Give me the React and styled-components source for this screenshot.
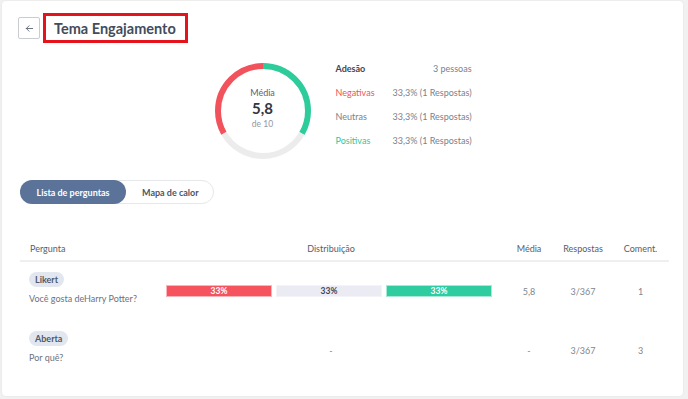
import React from "react";
import styled, { createGlobalStyle } from "styled-components";

const Global = createGlobalStyle`
  html, body { margin: 0; padding: 0; background: #f1f1f2; }
  body { font-family: Lato, "Open Sans", sans-serif; }
  * { box-sizing: border-box; }
`;

const Page = styled.div`
  padding: 1px 5px 3px 2px;
  height: 399px;
`;

const Card = styled.div`
  background: #fff;
  border-radius: 4px;
  box-shadow: 0 0 2px rgba(0,0,0,0.08);
  height: 395px;
  padding: 12px 16px 0 16px;
  display: flex;
  flex-direction: column;
`;

const Header = styled.div`
  display: flex;
  align-items: center;
  gap: 3px;
`;

const BackButton = styled.button`
  width: 22px;
  height: 22px;
  border: 1px solid #c9ccd1;
  border-radius: 2px;
  background: #fff;
  display: flex;
  align-items: center;
  justify-content: center;
  padding: 0;
  color: #5b6577;
`;

const TitleBox = styled.div`
  border: 3px solid #e5131b;
  height: 30px;
  width: 145px;
  padding-left: 8px;
  display: flex;
  align-items: center;
`;

const Title = styled.h1`
  margin: 0;
  font-size: 14.5px;
  font-weight: 700;
  color: #434c5b;
  white-space: nowrap;
`;

const Summary = styled.div`
  display: flex;
  justify-content: center;
  align-items: flex-start;
  gap: 24px;
  margin-top: 14px;
`;

const Donut = styled.div`
  position: relative;
  width: 98px;
  height: 98px;
  margin-top: 5px;
`;

const DonutCenter = styled.div`
  position: absolute;
  inset: 0;
  display: flex;
  flex-direction: column;
  align-items: center;
  justify-content: center;
  padding-bottom: 5px;
`;

const DonutLabel = styled.span`
  font-size: 9px;
  color: #5a6272;
  line-height: 12px;
`;

const DonutValue = styled.span`
  font-size: 15px;
  font-weight: 700;
  color: #2f3644;
  line-height: 19px;
`;

const DonutSub = styled.span`
  font-size: 8.5px;
  color: #9197a3;
  line-height: 13px;
`;

const Stats = styled.div`
  display: grid;
  grid-template-columns: auto auto;
  column-gap: 18px;
  width: 134px;
  margin-right: 2px;
`;

const StatLabel = styled.span`
  font-size: 9px;
  line-height: 24px;
  color: ${(p) => p.$color};
  font-weight: ${(p) => (p.$strong ? 700 : 400)};
`;

const StatValue = styled.span`
  font-size: 9px;
  line-height: 24px;
  color: #7b818c;
  text-align: right;
  white-space: nowrap;
`;

const Tabs = styled.div`
  display: flex;
  align-self: flex-start;
  width: 194px;
  height: 24px;
  border: 1px solid #e6e7ea;
  border-radius: 12px;
  margin-top: 20px;
  margin-left: 2px;
`;

const Tab = styled.div`
  display: flex;
  align-items: center;
  justify-content: center;
  margin: -1px 0;
  height: 24px;
  width: ${(p) => (p.$active ? "106px" : "auto")};
  padding: ${(p) => (p.$active ? "0" : "0 0 0 16px")};
  border-radius: 12px;
  background: ${(p) => (p.$active ? "#5b7399" : "transparent")};
  color: ${(p) => (p.$active ? "#fff" : "#4d5565")};
  font-size: 9px;
  font-weight: 700;
  margin-left: ${(p) => (p.$active ? "-1px" : "0")};
`;

const Table = styled.div`
  margin-top: 35px;
  width: 649px;
  margin-left: 2px;
`;

const Row = styled.div`
  display: grid;
  grid-template-columns: 148px 336px 50px 58px 57px;
  align-items: center;
  ${(p) =>
    p.$head
      ? `height: 23px; border-bottom: 2px solid #eeeff1; padding-bottom: 2px;`
      : `padding: 10px 0 17px;`}
`;

const HeadCell = styled.div`
  font-size: 9px;
  color: #565e6c;
  text-align: ${(p) => p.$align || "center"};
  padding-left: ${(p) => (p.$align === "left" ? "10px" : "0")};
  padding-right: ${(p) => p.$pr || "0"};
`;

const QuestionCell = styled.div`
  padding-left: 9px;
  display: flex;
  flex-direction: column;
  align-items: flex-start;
  gap: 6px;
`;

const Tag = styled.span`
  background: #e2e7ef;
  color: #4f5868;
  font-size: 9px;
  font-weight: 700;
  height: 15px;
  line-height: 15px;
  padding: 0 6px;
  border-radius: 8px;
`;

const Question = styled.span`
  font-size: 9px;
  color: #6c7280;
  line-height: 11px;
`;

const ValueCell = styled.div`
  font-size: 9px;
  color: #80868f;
  text-align: center;
  padding-top: 6px;
  padding-right: ${(p) => p.$pr || "0"};
`;

const Bars = styled.div`
  display: flex;
  gap: 4px;
  width: 326px;
  margin-left: -2px;
  padding-top: 6px;
`;

const Bar = styled.div`
  flex: 1;
  height: 12px;
  background: ${(p) => p.$bg};
  border: 1px solid ${(p) => p.$edge};
  color: ${(p) => p.$fg};
  font-size: 8.5px;
  font-weight: 700;
  display: flex;
  align-items: center;
  justify-content: center;
`;

function Ring() {
  const r = 45;
  const c = 2 * Math.PI * r;
  const seg = c / 3;
  const arc = (color, offsetThirds) => (
    <circle
      cx="49"
      cy="49"
      r={r}
      fill="none"
      stroke={color}
      strokeWidth="6"
      strokeDasharray={`${seg} ${c - seg}`}
      strokeDashoffset={-seg * offsetThirds}
      transform="rotate(-90 49 49)"
    />
  );
  return (
    <svg width="98" height="98" viewBox="0 0 98 98">
      {arc("#2ecc9b", 0)}
      {arc("#ececec", 1)}
      {arc("#f2525b", 2)}
    </svg>
  );
}

const rows = [
  { tag: "Likert", q: "Você gosta deHarry Potter?", dist: true, media: "5,8", resp: "3/367", com: "1" },
  { tag: "Aberta", q: "Por quê?", dist: false, media: "-", resp: "3/367", com: "3" },
];

export default function App() {
  return (
    <>
      <Global />
      <Page>
        <Card>
          <Header>
            <BackButton aria-label="Voltar">
              <svg width="9" height="9" viewBox="0 0 10 10" fill="none" stroke="#5b6577" strokeWidth="1" strokeLinecap="round">
                <path d="M8.5 5H1.5M4.5 2L1.5 5l3 3" />
              </svg>
            </BackButton>
            <TitleBox>
              <Title>Tema Engajamento</Title>
            </TitleBox>
          </Header>

          <Summary>
            <Donut>
              <Ring />
              <DonutCenter>
                <DonutLabel>Média</DonutLabel>
                <DonutValue>5,8</DonutValue>
                <DonutSub>de 10</DonutSub>
              </DonutCenter>
            </Donut>
            <Stats>
              <StatLabel $color="#3f4654" $strong>Adesão</StatLabel>
              <StatValue>3 pessoas</StatValue>
              <StatLabel $color="#f2525b">Negativas</StatLabel>
              <StatValue>33,3% (1 Respostas)</StatValue>
              <StatLabel $color="#7b818c">Neutras</StatLabel>
              <StatValue>33,3% (1 Respostas)</StatValue>
              <StatLabel $color="#2ec99a">Positivas</StatLabel>
              <StatValue>33,3% (1 Respostas)</StatValue>
            </Stats>
          </Summary>

          <Tabs>
            <Tab $active>Lista de perguntas</Tab>
            <Tab>Mapa de calor</Tab>
          </Tabs>

          <Table>
            <Row $head>
              <HeadCell $align="left">Pergunta</HeadCell>
              <HeadCell $pr="10px">Distribuição</HeadCell>
              <HeadCell>Média</HeadCell>
              <HeadCell>Respostas</HeadCell>
              <HeadCell>Coment.</HeadCell>
            </Row>
            {rows.map((r) => (
              <Row key={r.tag}>
                <QuestionCell>
                  <Tag>{r.tag}</Tag>
                  <Question>{r.q}</Question>
                </QuestionCell>
                {r.dist ? (
                  <Bars>
                    <Bar $bg="#f5545e" $edge="#fbb4b8" $fg="#fff">33%</Bar>
                    <Bar $bg="#ebebf4" $edge="#f3f3f8" $fg="#3f4654">33%</Bar>
                    <Bar $bg="#2ecc9f" $edge="#a6ead5" $fg="#fff">33%</Bar>
                  </Bars>
                ) : (
                  <ValueCell $pr="10px">-</ValueCell>
                )}
                <ValueCell>{r.media}</ValueCell>
                <ValueCell>{r.resp}</ValueCell>
                <ValueCell>{r.com}</ValueCell>
              </Row>
            ))}
          </Table>
        </Card>
      </Page>
    </>
  );
}
